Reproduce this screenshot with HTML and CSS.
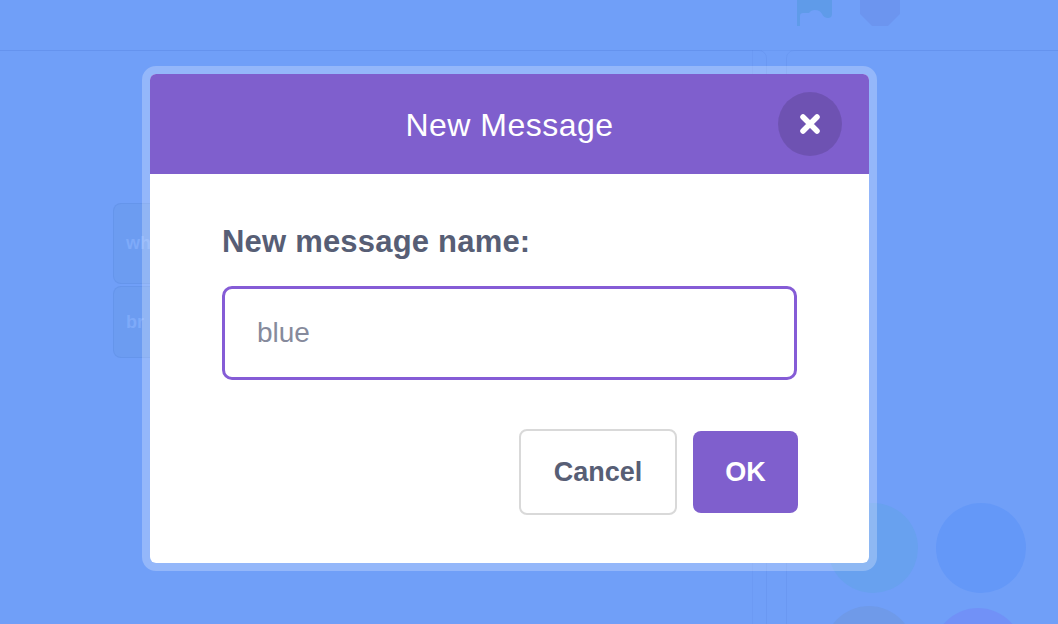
FILE: index.html
```html
<!DOCTYPE html>
<html>
<head>
<meta charset="utf-8">
<link rel="stylesheet" href="styles.css">
</head>
<body>
<div class="stage">
  <div class="bg">
    <div class="bg-topline"></div>
    <div class="bg-panel bg-panel-left"></div>
    <div class="bg-panel bg-panel-right"></div>
    <div class="bg-vline bg-vline-1"></div>
    <div class="bg-flag">
      <svg width="40" height="28" viewBox="0 0 40 28"><path d="M2 26 V0 H37 V14 Q37 18 33 18 Q29 18 27 14 Q25 10 20 10 Q16 10 14 13 L8 13 Q5 13 5 16 V26 Z" fill="#5f9be9"/></svg>
    </div>
    <div class="bg-stop">
      <svg width="42" height="28" viewBox="0 0 42 28"><path d="M1 -12 L13 -24 H29 L41 -12 V14 L29 26 H13 L1 14 Z" fill="#6c95ef"/></svg>
    </div>
    <div class="bg-block bg-block-1"><span>wh</span></div>
    <div class="bg-block bg-block-2"><span>br</span></div>
    <div class="bg-circle c1"></div>
    <div class="bg-circle c2"></div>
    <div class="bg-circle c3"></div>
    <div class="bg-circle c4"></div>
  </div>

  <div class="modal">
    <div class="modal-inner">
      <div class="modal-header">
        <div class="modal-title">New Message</div>
        <button class="close-btn" aria-label="Close">
          <svg width="22" height="22" viewBox="0 0 22 22"><path d="M4 4 L18 18 M18 4 L4 18" stroke="#fff" stroke-width="5.5" stroke-linecap="round"/></svg>
        </button>
      </div>
      <div class="modal-body">
        <div class="label">New message name:</div>
        <div class="input">blue</div>
        <div class="actions">
          <button class="btn btn-cancel">Cancel</button>
          <button class="btn btn-ok">OK</button>
        </div>
      </div>
    </div>
  </div>
</div>
</body>
</html>
```
FILE: styles.css
```css
* { box-sizing: border-box; }
html, body { margin: 0; padding: 0; }
body {
  width: 1058px;
  height: 624px;
  overflow: hidden;
  background: #709ff8;
  font-family: "Liberation Sans", Arial, Helvetica, sans-serif;
}
.stage {
  position: relative;
  width: 1058px;
  height: 624px;
  overflow: hidden;
  padding: 66px 0 0 142px;
}
.bg { position: absolute; inset: 0; overflow: hidden; }
.bg-topline {
  position: absolute; left: 0; right: 0; top: 50px; height: 1px;
  background: rgba(60, 100, 200, 0.09);
}
.bg-panel {
  position: absolute; top: 50px; bottom: -20px;
  border: 1px solid rgba(60, 100, 200, 0.1);
  border-radius: 8px;
}
.bg-panel-left { left: -10px; width: 777px; }
.bg-panel-right { left: 786px; right: -10px; }
.bg-vline {
  position: absolute; top: 50px; bottom: 0; width: 1px;
  background: rgba(60, 100, 200, 0.07);
}
.bg-vline-1 { left: 752px; }
.bg-flag { position: absolute; left: 795px; top: 0; }
.bg-stop { position: absolute; left: 859px; top: 0; }
.bg-flag svg, .bg-stop svg { display: block; }
.bg-block {
  position: absolute; left: 113px; width: 60px;
  background: #6c9cf1;
  border: 1px solid rgba(60, 100, 200, 0.12);
  border-radius: 8px;
  display: flex; align-items: center;
  padding-left: 12px;
  font-weight: bold; font-size: 18px; color: #7eaaf9;
}
.bg-block-1 { top: 203px; height: 81px; }
.bg-block-2 { top: 286px; height: 72px; }
.bg-circle { position: absolute; width: 90px; height: 90px; border-radius: 50%; }
.c1 { left: 828px; top: 503px; background: #68a1ef; }
.c2 { left: 936px; top: 503px; background: #6498f8; }
.c3 { left: 824px; top: 606px; background: #6f9ae9; }
.c4 { left: 933px; top: 608px; background: #7191f7; }

.modal {
  position: relative;
  width: 735px;
  height: 505px;
  border: 8px solid rgba(255, 255, 255, 0.25);
  border-radius: 14px;
  background-clip: padding-box;
}
.modal-inner {
  width: 100%;
  height: 100%;
  background: #fff;
  border-radius: 6px;
  overflow: hidden;
  display: flex;
  flex-direction: column;
}
.modal-header {
  position: relative;
  height: 100px;
  flex: 0 0 100px;
  background: #7f5fcd;
  display: flex;
  align-items: center;
  justify-content: center;
}
.modal-title {
  color: #fff;
  font-size: 32px;
  letter-spacing: 0.5px;
  margin-top: 2px;
}
.close-btn {
  position: absolute;
  right: 27px;
  top: 18px;
  width: 64px;
  height: 64px;
  border-radius: 50%;
  border: none;
  padding: 0;
  background: rgba(0, 0, 0, 0.13);
  display: flex;
  align-items: center;
  justify-content: center;
}
.close-btn svg { display: block; }
.modal-body {
  padding: 50px 72px 0 72px;
  display: flex;
  flex-direction: column;
}
.label {
  font-weight: bold;
  font-size: 31px;
  letter-spacing: 0.2px;
  color: #575e75;
  line-height: 36px;
  height: 36px;
}
.input {
  margin-top: 26px;
  height: 94px;
  border: 3px solid #855cd6;
  border-radius: 10px;
  padding-left: 32px;
  display: flex;
  align-items: center;
  font-size: 28px;
  color: #868a9c;
}
.actions {
  margin-top: 49px;
  display: flex;
  justify-content: flex-end;
  align-items: center;
  gap: 16px;
  margin-right: -1px;
}
.btn {
  font-family: inherit;
  font-weight: bold;
  font-size: 27px;
  border-radius: 8px;
  padding: 0;
  display: flex;
  align-items: center;
  justify-content: center;
}
.btn-cancel {
  width: 158px;
  height: 86px;
  background: #fff;
  border: 2px solid #d9d9d9;
  color: #575e75;
}
.btn-ok {
  width: 105px;
  height: 82px;
  background: #7f5fcd;
  border: none;
  color: #fff;
}
```
